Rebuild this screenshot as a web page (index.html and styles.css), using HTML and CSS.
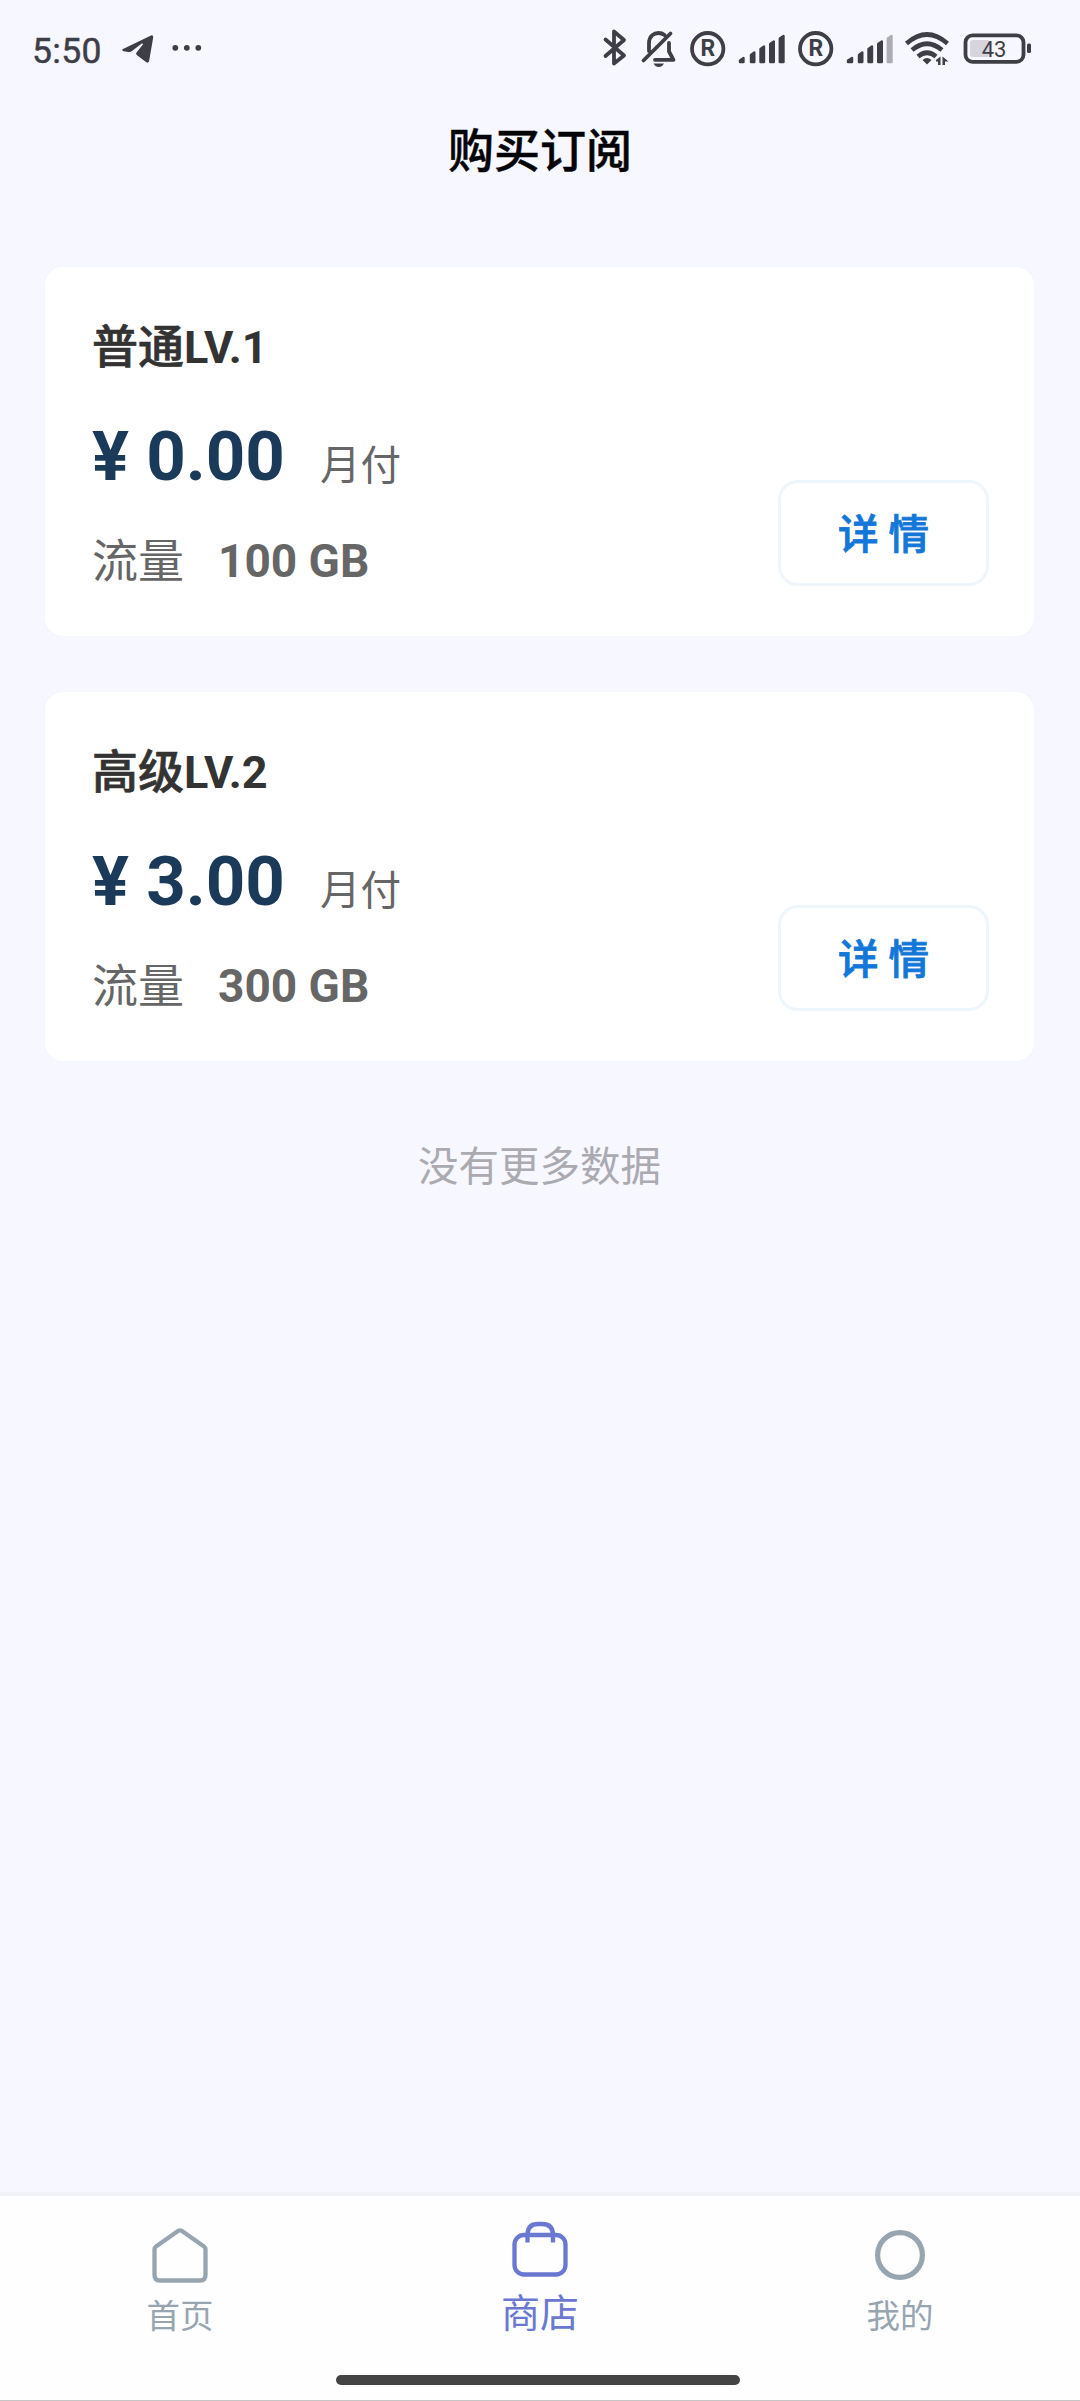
FILE: index.html
```html
<!DOCTYPE html>
<html lang="zh-CN">
<head>
<meta charset="utf-8">
<title>购买订阅</title>
<link rel="stylesheet" href="styles.css">
</head>
<body>
<div class="app">
  <header class="status">
    <span class="clock">5:50</span>
    <svg class="ico" width="96" height="40" viewBox="112 28 96 40">
      <path class="solid" d="M123 49Q121 50 123.500 51.200L128.500 52Q130.500 52.200 132 51L141.500 43.800Q144 42.600 142.500 45L136.500 52.500Q135.300 54 137 55.200L146 62Q148.600 63.800 149.200 60.600L153.200 37.500Q153.400 34.800 151 35.500Z"/>
      <circle class="solid" cx="175.300" cy="47.800" r="2.900"/><circle class="solid" cx="186.800" cy="47.800" r="2.900"/><circle class="solid" cx="198.300" cy="47.800" r="2.900"/>
    </svg>
    <div class="status-right">
      <svg class="ico" width="34" height="40" viewBox="600 28 34 40"><path class="line" d="M605.500 39.500L624 55.500 614 63.500V31.500L624 40 605.500 56"/></svg>
      <svg class="ico" width="50" height="40" viewBox="634 28 50 40">
        <path class="line" d="M643.500 60.500L670.500 33.500M649 51V43.500C649 36 654 33 658.500 33Q662 33 664.500 35M655 59.800H673.500L669 51.500V43"/>
        <path class="solid" d="M653.500 63.500H664Q662 67 658.800 67Q655.500 67 653.500 63.500Z"/>
      </svg>
      <svg class="ico" width="48" height="40" viewBox="684 28 48 40"><circle class="line" cx="707.700" cy="48.700" r="15.700"/><text class="reg" x="707.900" y="56">R</text></svg>
      <svg class="ico" width="60" height="40" viewBox="732 28 60 40"><path class="bars" d="M740 62V60.500L743.500 58V62ZM751 62V55L754.300 52.500V62ZM760.500 62V49L764 46.500V62ZM770.200 62V44L773.800 41.500V62ZM779.800 62V38.500L783.500 36V62Z"/></svg>
      <svg class="ico" width="48" height="40" viewBox="792 28 48 40"><circle class="line" cx="815.700" cy="48.700" r="15.700"/><text class="reg" x="815.900" y="56">R</text></svg>
      <svg class="ico" width="60" height="40" viewBox="840 28 60 40"><path class="bars" d="M848 62V60.500L852 58V62ZM859 62V55L862.300 52.500V62ZM868.500 62V49L872 46.500V62ZM878.200 62V44L881.800 41.500V62Z"/><path class="bars weak" d="M887.800 62V38.500L891.500 36V62Z"/></svg>
      <svg class="ico" width="56" height="40" viewBox="900 28 56 40">
        <path class="wave" d="M906.500 43.500Q927 25.500 947.500 43.500M912 50Q927 37.500 942 50M918 56.500Q927 49 936 56.500"/>
        <path class="solid" d="M922.500 60Q927 56 931.500 60L927 64.500ZM936 60L940.500 56.500V65H938V61.500H936ZM942.500 56.500L948.500 61.500H945V65H942.500Z"/>
      </svg>
      <svg class="ico" width="80" height="40" viewBox="956 28 80 40">
        <rect class="charge" x="970" y="40" width="20" height="17" rx="3"/>
        <rect class="line" x="965.500" y="35.300" width="58" height="26.500" rx="7"/>
        <rect class="solid" x="1027" y="43.500" width="4" height="9.500" rx="1.500"/>
        <text class="level" x="994" y="56.600">43</text>
      </svg>
    </div>
  </header>

  <h1 class="page-title">购买订阅</h1>

  <main class="plans">
    <section class="plan">
      <div class="info">
        <h2 class="name">普通<b>LV.1</b></h2>
        <p class="cost"><span class="price">¥ 0.00</span><span class="period">月付</span></p>
        <p class="traffic"><span>流量</span><b>100 GB</b></p>
      </div>
      <button class="detail">详 情</button>
    </section>
    <section class="plan">
      <div class="info">
        <h2 class="name">高级<b>LV.2</b></h2>
        <p class="cost"><span class="price">¥ 3.00</span><span class="period">月付</span></p>
        <p class="traffic"><span>流量</span><b>300 GB</b></p>
      </div>
      <button class="detail">详 情</button>
    </section>
    <p class="end">没有更多数据</p>
  </main>

  <nav class="tabs">
    <div class="tab-row">
      <a class="tab">
        <svg width="64" height="64" viewBox="0 0 64 64"><path d="M8 23.500Q6.500 24.500 6.500 26.500V52Q6.500 57.500 12 57.500H52Q57.500 57.500 57.500 52V26.500Q57.500 24.500 56 23.500L34 8Q32 6.800 30 8Z"/></svg>
        <span>首页</span>
      </a>
      <a class="tab active">
        <svg width="64" height="64" viewBox="0 0 64 64"><rect x="6.500" y="17" width="51" height="39.500" rx="9.500"/><path d="M19.500 24.500V17Q19.500 6 30 6H34Q45 6 45 17V24.500"/></svg>
        <span>商店</span>
      </a>
      <a class="tab">
        <svg width="64" height="64" viewBox="0 0 64 64"><circle cx="32" cy="32" r="22.400"/></svg>
        <span>我的</span>
      </a>
    </div>
    <div class="home-bar"></div>
  </nav>
</div>
</body>
</html>
```
FILE: styles.css
```css
* { box-sizing: border-box; margin: 0; padding: 0; }
body {
  background: #f7f7ff;
  font-family: Roboto, "Noto Sans CJK SC", sans-serif;
}
.app { width: 1080px; height: 2401px; display: flex; flex-direction: column; }

.status { height: 98px; padding: 28px 44px 30px 32px; display: flex; color: #3e3e47; }
.clock { width: 80px; font-size: 35.500px; line-height: 46px; letter-spacing: 0.300px; -webkit-text-stroke: 0.500px currentColor; }
.status-right { margin-left: auto; display: flex; }
.ico { display: block; flex: none; }
.solid { fill: #3e3e47; }
.line { fill: none; stroke: #3e3e47; stroke-width: 3.800; stroke-linecap: round; stroke-linejoin: round; }
.bars { fill: #3e3e47; stroke: #3e3e47; stroke-width: 2.400; stroke-linejoin: round; }
.weak { fill: #adacb5; stroke: #adacb5; }
.wave { fill: none; stroke: #3e3e47; stroke-width: 4.600; }
.charge { fill: #d6d5de; }
.reg { font-size: 23px; font-weight: 700; fill: #3e3e47; text-anchor: middle; }
.level { font-size: 22px; fill: #3e3e47; text-anchor: middle; }

.page-title { height: 106px; font-size: 46px; font-weight: 500; line-height: 106px; text-align: center; color: #050508; -webkit-text-stroke: 0.500px currentColor; }

.plans { flex: 1; padding: 63px 46px 0 45px; }
.plan {
  height: 369px;
  margin-bottom: 56px;
  padding: 53px 45px 50px 47px;
  display: flex;
  justify-content: space-between;
  align-items: flex-end;
  background: #fff;
  border-radius: 18px;
  box-shadow: 0 0 3px #eef3fb;
}
.info { align-self: flex-start; }
.name { font-size: 46px; font-weight: 500; line-height: 54px; color: #333; -webkit-text-stroke: 0.700px currentColor; }
.name b { font-size: 45px; font-weight: 700; -webkit-text-stroke: 0; }
.cost { margin-top: 42px; height: 80px; line-height: 80px; display: flex; align-items: baseline; gap: 35px; }
.price { font-size: 69px; font-weight: 700; color: #1b3a59; }
.period { font-size: 40.500px; color: #666; }
.traffic { margin-top: 37px; font-size: 46px; line-height: 54px; color: #666; display: flex; gap: 34px; }
.detail {
  width: 211px;
  height: 106px;
  padding-top: 4px;
  background: #fff;
  border: 3px solid #eef6fb;
  border-radius: 20px;
  font: 500 40.500px/96px Roboto, "Noto Sans CJK SC", sans-serif;
  color: #1277d8;
  -webkit-text-stroke: 0.800px currentColor;
}
.end { padding-top: 20px; font-size: 40.500px; line-height: 60px; text-align: center; color: #aaaab0; }

.tabs { height: 209px; background: #fefefe; border-top: 4px solid #f1f1f8; border-bottom: 1px solid #c6c6c6; }
.tab-row { height: 179px; display: grid; grid-template-columns: repeat(3, 1fr); }
.tab { padding-top: 27px; display: flex; flex-direction: column; align-items: center; color: #97a5b1; }
.tab svg { fill: none; stroke: currentColor; stroke-width: 4.300; }
.tab:last-child svg { stroke-width: 5.200; }
.tab span { font-size: 33.500px; line-height: 60px; }
.tab.active { padding-top: 22px; color: #6a78d1; }
.tab.active span { font-size: 39px; line-height: 65px; }
.home-bar { width: 404px; height: 10px; margin: 0 auto; border-radius: 5px; background: #444; transform: translateX(-2px); }
```
